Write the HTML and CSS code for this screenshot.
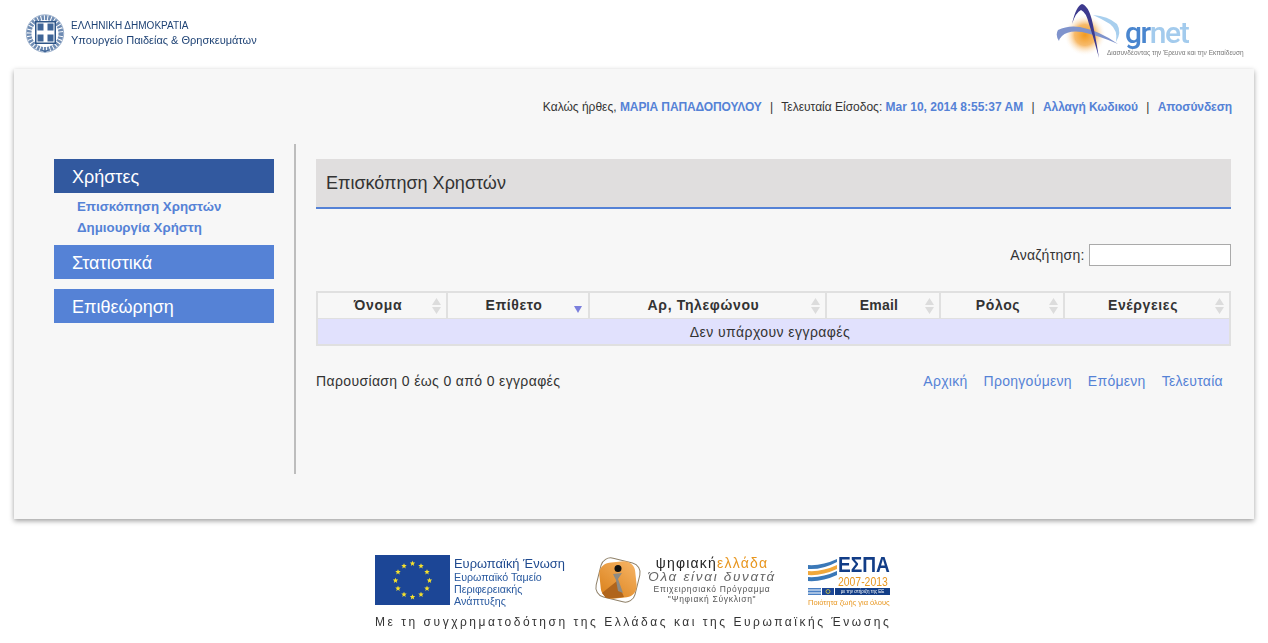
FILE: index.html
```html
<!DOCTYPE html>
<html lang="el">
<head>
  <meta charset="UTF-8">
  <title>Επισκόπηση Χρηστών</title>
  <link rel="stylesheet" href="styles.css">
</head>
<body>
  <!-- Κεφαλίδα με λογότυπα -->
  <header class="top-logos">
    <div class="ministry">
      <svg class="emblem" width="40" height="40" viewBox="0 0 40 40">
        <circle cx="20" cy="19.500" r="16" fill="none" stroke="#6f8cb3" stroke-width="5" stroke-dasharray="2.400 1"/>
        <circle cx="20" cy="19.500" r="18.700" fill="none" stroke="#9db1cc" stroke-width="1"/>
        <path d="M10 7h21v23H10z" fill="#2f5688"/>
        <path d="M11.500 8.500h18v20h-18z" fill="#fff"/>
        <path d="M12.500 9.500h6v7h-6zM22.500 9.500h6v7h-6zM12.500 20.500h6v7h-6zM22.500 20.500h6v7h-6z" fill="#3f6597"/>
        <path d="M14 35l6 3.500 6-3.500-6 1.500z" fill="#3f6597"/>
      </svg>
      <div class="ministry-text">
        <span class="ministry-line1">ΕΛΛΗΝΙΚΗ ΔΗΜΟΚΡΑΤΙΑ</span>
        <span class="ministry-line2">Υπουργείο Παιδείας &amp; Θρησκευμάτων</span>
      </div>
    </div>
    <div class="grnet">
      <svg class="grnet-mark" width="80" height="64" viewBox="0 0 80 64">
        <defs>
          <radialGradient id="glow">
            <stop offset="0" stop-color="#f29a1f"/>
            <stop offset="0.5" stop-color="#f7bb6c"/>
            <stop offset="1" stop-color="#fff" stop-opacity="0"/>
          </radialGradient>
        </defs>
        <circle cx="35" cy="35" r="21" fill="url(#glow)"/>
        <path d="M8 30Q18 25 30 27Q50 31 68 44Q50 36 32 32Q18 30 12 36Q9 39 9 41Q5 35 8 30z" fill="#7f93cc"/>
        <path d="M22 24Q26 6 32 4Q40 6 44 30Q47 45 49 58Q43 36 39 24Q36 12 31 10Q26 12 22 24z" fill="#3d3a8e"/>
        <path d="M43 15Q58 16 67 24Q72 32 66 42Q68 30 60 24Q52 19 43 15z" fill="#a8cfee"/>
      </svg>
      <div class="grnet-text">
        <div class="grnet-name">gr<span>net</span></div>
        <div class="grnet-slogan">Διασυνδέοντας την Έρευνα και την Εκπαίδευση</div>
      </div>
    </div>
  </header>

  <div class="card">
    <div class="user-bar">
      Καλώς ήρθες, <a href="#">ΜΑΡΙΑ ΠΑΠΑΔΟΠΟΥΛΟΥ</a>
      <span class="sep">|</span>
      Τελευταία Είσοδος: <b>Mar 10, 2014 8:55:37 AM</b>
      <span class="sep">|</span>
      <a href="#">Αλλαγή Κωδικού</a>
      <span class="sep">|</span>
      <a href="#">Αποσύνδεση</a>
    </div>

    <div class="columns">
      <nav class="side-menu">
        <a class="menu-item active" href="#">Χρήστες</a>
        <a class="sub-item" href="#">Επισκόπηση Χρηστών</a>
        <a class="sub-item" href="#">Δημιουργία Χρήστη</a>
        <a class="menu-item second" href="#">Στατιστικά</a>
        <a class="menu-item" href="#">Επιθεώρηση</a>
      </nav>

      <main class="content">
        <h1 class="page-title">Επισκόπηση Χρηστών</h1>

        <div class="search-row">
          <label>Αναζήτηση: <input type="text"></label>
        </div>

        <table class="users-table">
          <thead>
            <tr>
              <th class="col-name">Όνομα<svg class="sort" viewBox="0 0 9 16"><path d="M4.500 0L9 7H0zM0 9h9l-4.500 7z" fill="#dcdcdc"/></svg></th>
              <th class="col-surname">Επίθετο<svg class="sort-active" viewBox="0 0 8 7"><path d="M0 0h8L4 7z" fill="#7b7fdc"/></svg></th>
              <th class="col-phone">Αρ, Τηλεφώνου<svg class="sort" viewBox="0 0 9 16"><path d="M4.500 0L9 7H0zM0 9h9l-4.500 7z" fill="#dcdcdc"/></svg></th>
              <th class="col-email">Email<svg class="sort" viewBox="0 0 9 16"><path d="M4.500 0L9 7H0zM0 9h9l-4.500 7z" fill="#dcdcdc"/></svg></th>
              <th class="col-role">Ρόλος<svg class="sort" viewBox="0 0 9 16"><path d="M4.500 0L9 7H0zM0 9h9l-4.500 7z" fill="#dcdcdc"/></svg></th>
              <th class="col-actions">Ενέργειες<svg class="sort" viewBox="0 0 9 16"><path d="M4.500 0L9 7H0zM0 9h9l-4.500 7z" fill="#dcdcdc"/></svg></th>
            </tr>
          </thead>
          <tbody>
            <tr><td colspan="6">Δεν υπάρχουν εγγραφές</td></tr>
          </tbody>
        </table>

        <div class="table-foot">
          <span>Παρουσίαση 0 έως 0 από 0 εγγραφές</span>
          <div class="pager">
            <a href="#">Αρχική</a>
            <a href="#">Προηγούμενη</a>
            <a href="#">Επόμενη</a>
            <a href="#">Τελευταία</a>
          </div>
        </div>
      </main>
    </div>
  </div>

  <!-- Λογότυπα χρηματοδότησης -->
  <footer class="sponsors">
    <div class="sponsor-row">
      <svg class="eu-flag" width="75" height="50" viewBox="0 0 75 50">
        <defs>
          <path id="star" d="M0-2.800L.8-.9 2.700-.9 1.200.4 1.700 2.400 0 1.300-1.700 2.400-1.200.4-2.700-.9-.8-.9z" fill="#f5e02c"/>
        </defs>
        <rect width="75" height="50" fill="#1c4696"/>
        <use href="#star" x="37.500" y="8.500"/><use href="#star" x="46" y="11"/><use href="#star" x="52" y="17"/>
        <use href="#star" x="54.500" y="25.500"/><use href="#star" x="52" y="33.500"/><use href="#star" x="46" y="39.500"/>
        <use href="#star" x="37.500" y="42"/><use href="#star" x="29" y="39.500"/><use href="#star" x="23" y="33.500"/>
        <use href="#star" x="20.500" y="25.500"/><use href="#star" x="23" y="17"/><use href="#star" x="29" y="11"/>
      </svg>
      <div class="eu-text">
        <div class="eu-title">Ευρωπαϊκή Ένωση</div>
        <div>Ευρωπαϊκό Ταμείο</div>
        <div>Περιφερειακής</div>
        <div>Ανάπτυξης</div>
      </div>
      <svg class="dh-icon" width="48" height="50" viewBox="0 0 48 50">
        <defs>
          <linearGradient id="dh-orange" x1="1" y1="0" x2="0" y2="1">
            <stop offset="0" stop-color="#f7b566"/>
            <stop offset="1" stop-color="#d97f18"/>
          </linearGradient>
        </defs>
        <rect x="4" y="5" width="40" height="40" rx="10" fill="#fff" stroke="#8f8068" stroke-width="1" transform="rotate(14 24 25)"/>
        <rect x="6" y="7" width="36" height="36" rx="11" fill="url(#dh-orange)" transform="rotate(-6 24 25)"/>
        <path d="M8 38L23 26L30 42Q18 44 12 43z" fill="#b0651c"/>
        <path d="M19 19L28 18L24 24L29 38L24 36L22 25z" fill="#8d8a84"/>
        <circle cx="24" cy="13.500" r="3.500" fill="#111"/>
      </svg>
      <div class="dh-text">
        <div class="dh-name">ψηφιακή<span>ελλάδα</span></div>
        <div class="dh-slogan">Όλα είναι δυνατά</div>
        <div class="dh-small">Επιχειρησιακό Πρόγραμμα</div>
        <div class="dh-small">"Ψηφιακή Σύγκλιση"</div>
      </div>
      <div class="espa">
        <svg class="espa-waves" width="29" height="23" viewBox="0 0 29 23">
          <path d="M0 6Q14 7 29 0V3Q14 11 0 10z" fill="#3a78b8"/>
          <path d="M0 12Q14 13 29 6V10Q14 17 0 16z" fill="#f0a83c"/>
          <path d="M0 18Q14 19 29 12V16Q14 23 0 22z" fill="#3a78b8"/>
        </svg>
        <div class="espa-word">ΕΣΠΑ</div>
        <div class="espa-years">2007-2013</div>
        <div class="espa-flags">
          <svg width="13" height="7" viewBox="0 0 13 7"><rect width="13" height="7" fill="#4a80c4"/><path d="M0 2h13M0 5h13" stroke="#fff"/></svg>
          <svg width="12" height="7" viewBox="0 0 12 7"><rect width="12" height="7" fill="#1c4696"/><circle cx="6" cy="3.500" r="2" fill="none" stroke="#f5e02c" stroke-width=".7"/></svg>
          <span>με την στήριξη της ΕΕ</span>
        </div>
        <div class="espa-motto">Ποιότητα ζωής για όλους</div>
      </div>
    </div>
    <div class="sponsor-caption">Με τη συγχρηματοδότηση της Ελλάδας και της Ευρωπαϊκής Ένωσης</div>
  </footer>
</body>
</html>
```

FILE: styles.css
```css
body {
  margin: 0;
  background-color: #fff;
  font-family: "Liberation Sans", Arial, sans-serif;
  font-size: 14px;
  color: #333;
}
a {
  color: #5582d6;
  text-decoration: none;
}

/* header */
.top-logos {
  height: 69px;
  display: flex;
  justify-content: space-between;
  padding: 0 23px 0 25px;
}
.ministry {
  display: flex;
  align-items: flex-start;
  padding-top: 14px;
  filter: blur(0.3px);
}
.ministry-text {
  margin-left: 6px;
  padding-top: 5px;
  color: #1f4375;
  display: flex;
  flex-direction: column;
}
.ministry-line1 {
  font-size: 10px;
  line-height: 14px;
}
.ministry-line2 {
  font-size: 11px;
  line-height: 15px;
}
.grnet {
  display: flex;
  width: 195px;
  filter: blur(0.3px);
}
.grnet-mark {
  flex: none;
}
.grnet-text {
  margin-left: -23px;
  padding-top: 17px;
}
.grnet-name {
  font-family: Roboto, sans-serif;
  font-size: 30px;
  line-height: 32px;
  letter-spacing: -1.4px;
  font-weight: 500;
  color: #4a86cf;
  padding-left: 18px;
}
.grnet-name span {
  color: #a3cbed;
}
.grnet-slogan {
  font-size: 6.5px;
  line-height: 8px;
  color: #777;
  white-space: nowrap;
}

/* main card */
.card {
  margin: 0 14px;
  height: 450px;
  background: #f7f7f7;
  box-shadow: 0 2px 5px rgba(0,0,0,0.38);
}
.user-bar {
  height: 75px;
  padding: 31px 22px 0 0;
  box-sizing: border-box;
  text-align: right;
  font-size: 12px;
  line-height: 15px;
  color: #333;
}
.user-bar a, .user-bar b {
  color: #5582d6;
  font-weight: bold;
}
.user-bar a {
  letter-spacing: -0.1px;
}
.sep {
  margin: 0 5px;
}
.columns {
  display: flex;
  padding-left: 40px;
}

/* sidebar */
.side-menu {
  width: 220px;
  padding-top: 15px;
  margin-right: 20px;
}
.menu-item {
  display: block;
  height: 34px;
  line-height: 36px;
  padding-left: 18px;
  background: #5582d6;
  color: #fff;
  font-size: 18px;
  margin-bottom: 10px;
}
.menu-item.active {
  background: #32599f;
  margin-bottom: 0;
}
.menu-item.second {
  margin-top: 7px;
}
.sub-item {
  display: block;
  padding-left: 23px;
  font-size: 13.3px;
  font-weight: bold;
  line-height: 21px;
}
.menu-item.active + .sub-item {
  margin-top: 3px;
}

/* content */
.content {
  width: 915px;
  height: 315px;
  border-left: 2px solid #bdbdbd;
  padding-left: 20px;
  padding-top: 15px;
}
.page-title {
  margin: 0;
  height: 48px;
  line-height: 48px;
  padding-left: 10px;
  background: #e0dede;
  border-bottom: 2px solid #5582d6;
  font-size: 18px;
  font-weight: normal;
  color: #333;
}
.search-row {
  margin-top: 35px;
  height: 22px;
  text-align: right;
  line-height: 22px;
  letter-spacing: 0.3px;
}
.search-row input {
  width: 142px;
  height: 22px;
  box-sizing: border-box;
  border: 1px solid #aaa;
  background: #fff;
  padding: 0;
  vertical-align: top;
}
.users-table {
  margin-top: 25px;
  width: 915px;
  border-collapse: separate;
  border-spacing: 0;
  border: 2px solid #e0e0e0;
  table-layout: fixed;
}
.users-table th {
  position: relative;
  height: 25px;
  padding: 0 8px 0 0;
  font-size: 14px;
  line-height: 25px;
  font-weight: bold;
  letter-spacing: 0.65px;
  background: #f7f7f7;
  border-right: 2px solid #e0e0e0;
  border-bottom: 1px solid #e0e0e0;
  box-sizing: content-box;
}
.users-table th:last-child {
  border-right: 0;
}
.users-table th.col-email {
  letter-spacing: 0.2px;
}
.col-name { width: 120px; }
.col-surname { width: 132px; }
.col-phone { width: 227px; }
.col-email { width: 104px; }
.col-role { width: 114px; }
.users-table td {
  height: 24px;
  padding: 1px 7px 0 0;
  text-align: center;
  background: #e1e1fd;
  line-height: 24px;
  letter-spacing: 0.43px;
}
.sort {
  position: absolute;
  right: 5px;
  top: 5px;
  width: 9px;
  height: 16px;
}
.sort-active {
  position: absolute;
  right: 6px;
  top: 13px;
  width: 8px;
  height: 7px;
}
.table-foot {
  display: flex;
  justify-content: space-between;
  margin-top: 27px;
  line-height: 16px;
  letter-spacing: 0.36px;
}
.pager {
  display: flex;
  gap: 16px;
  padding-right: 8px;
  letter-spacing: 0.28px;
}

/* footer logos */
.sponsors {
  width: 516px;
  margin: 36px 0 0 375px;
  filter: blur(0.3px);
}
.sponsor-row {
  display: flex;
  height: 56px;
}
.eu-flag {
  flex: none;
}
.eu-text {
  width: 140px;
  flex: none;
  margin-left: 4px;
  padding-top: 1px;
  font-size: 10.7px;
  line-height: 12px;
  color: #2a5aa0;
}
.eu-title {
  font-size: 12.9px;
  line-height: 15px;
  color: #1f4a8f;
}
.dh-icon {
  flex: none;
}
.dh-text {
  width: 128px;
  flex: none;
  margin-left: 6px;
  padding-top: 1px;
  text-align: center;
  color: #555;
  white-space: nowrap;
}
.dh-name {
  font-size: 14px;
  line-height: 14px;
  letter-spacing: 1.2px;
  color: #222;
}
.dh-name span {
  color: #e8961f;
}
.dh-slogan {
  font-size: 13.5px;
  line-height: 14px;
  font-style: italic;
  letter-spacing: 1.7px;
  color: #666;
}
.dh-small {
  font-size: 8.5px;
  line-height: 10px;
  letter-spacing: 0.7px;
}
.espa {
  position: relative;
  width: 82px;
  flex: none;
  margin-left: 32px;
}
.espa-waves {
  position: absolute;
  left: 0;
  top: 4px;
}
.espa-word {
  margin-left: 30px;
  font-size: 22px;
  line-height: 19px;
  font-weight: bold;
  color: #123d87;
  transform: scale(0.87, 1);
  transform-origin: left center;
}
.espa-years {
  margin: 2px 0 0 30px;
  font-size: 13px;
  line-height: 11px;
  color: #e8961f;
  white-space: nowrap;
  transform: scale(0.8, 1);
  transform-origin: left center;
}
.espa-flags {
  display: flex;
  gap: 1px;
  margin-top: 1px;
  height: 7px;
  overflow: hidden;
}
.espa-flags span {
  flex: 1;
  background: #123d87;
  color: #fff;
  font-size: 4.5px;
  line-height: 7px;
  text-align: center;
  white-space: nowrap;
  overflow: hidden;
}
.espa-motto {
  margin-top: 3px;
  font-size: 7.5px;
  line-height: 9px;
  color: #e8961f;
  white-space: nowrap;
}
.sponsor-caption {
  margin-top: 3px;
  font-size: 12px;
  line-height: 16px;
  letter-spacing: 2.53px;
  white-space: nowrap;
  color: #333;
}
```
